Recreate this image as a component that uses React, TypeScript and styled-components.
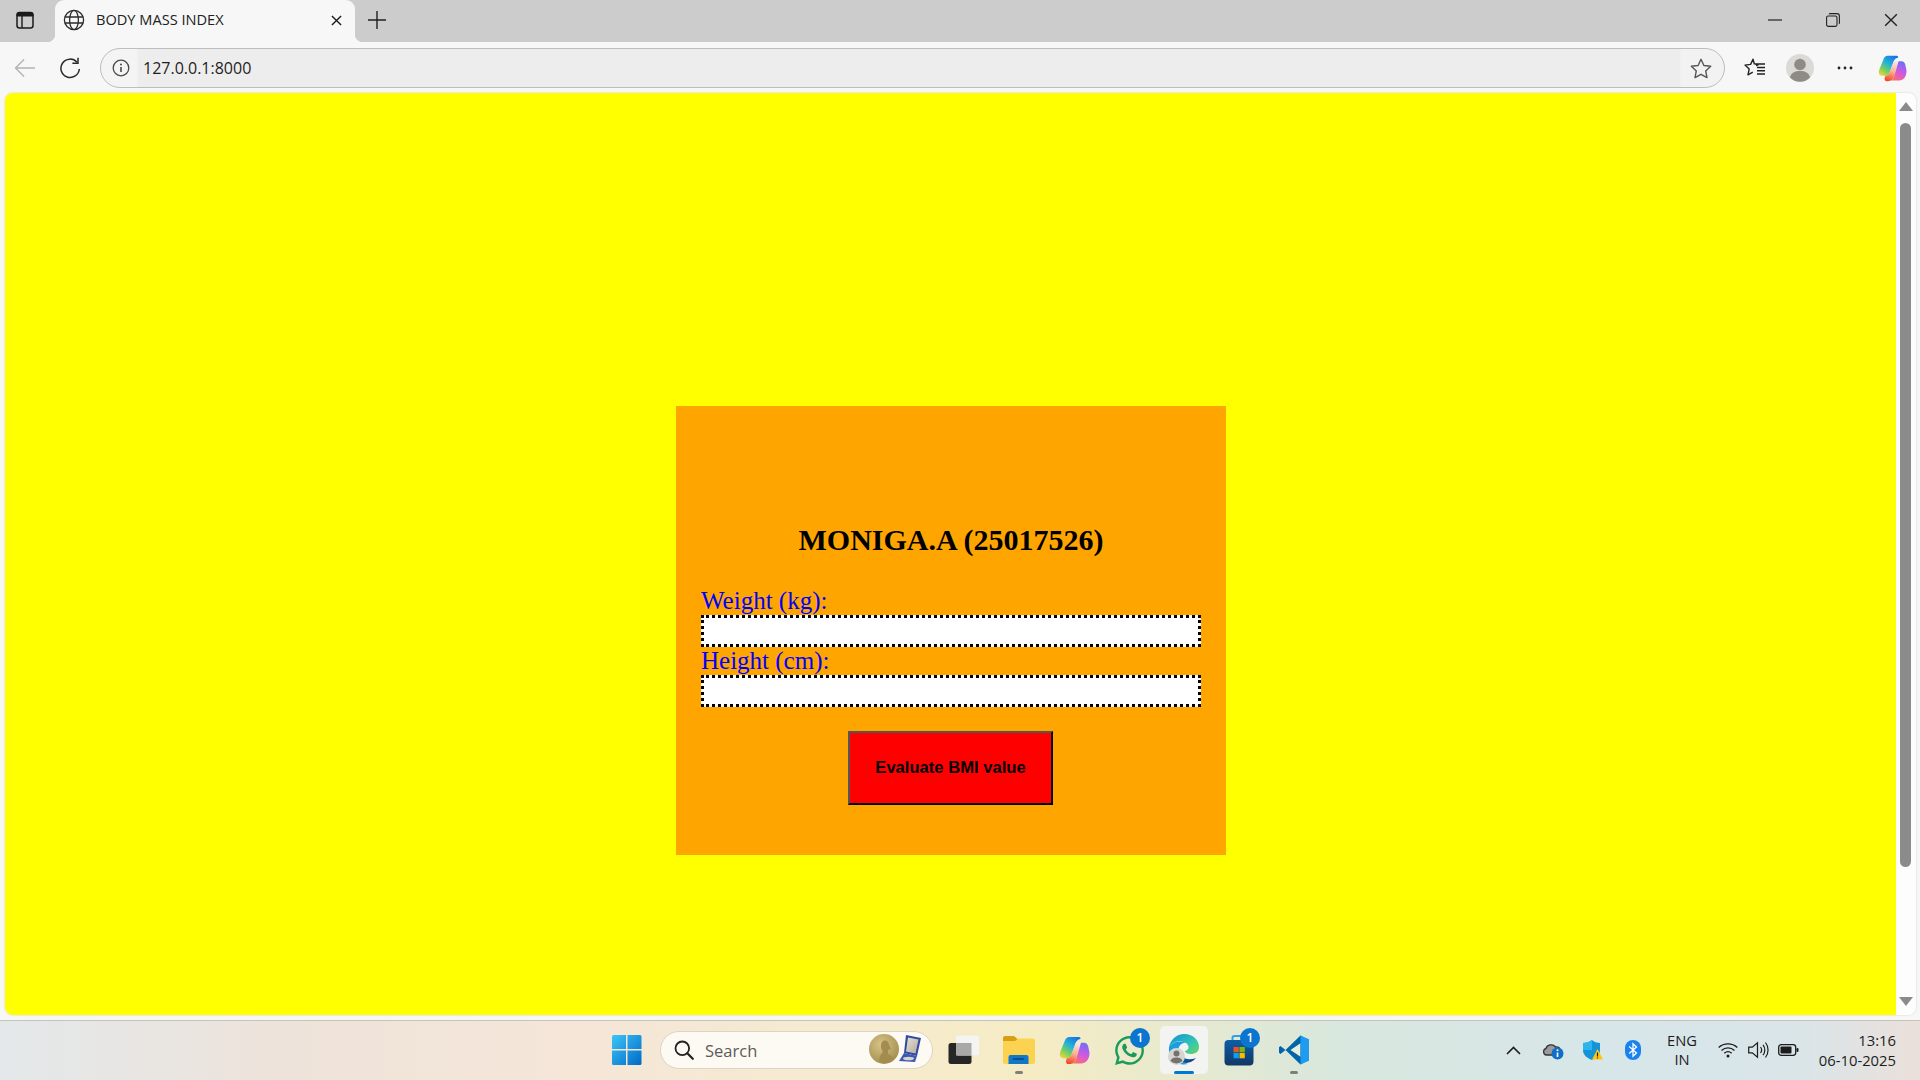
import React from "react";
import styled, { createGlobalStyle } from "styled-components";
import { FaWhatsapp } from "react-icons/fa";

const Global = createGlobalStyle`
  html, body { margin: 0; padding: 0; height: 100%; overflow: hidden; }
  #root { height: 100%; }
`;

const UI = `"Open Sans", "Noto Sans", "Liberation Sans", sans-serif`;

const Desktop = styled.div`
  width: 1920px;
  height: 1080px;
  display: flex;
  flex-direction: column;
  overflow: hidden;
  background: #f7f7f7;
  font-family: ${UI};
`;

const TabStrip = styled.header`
  height: 42px;
  flex: none;
  display: flex;
  align-items: stretch;
  background: #cccccc;
`;

const StripButton = styled.div<{ $w: number }>`
  width: ${(p) => p.$w}px;
  flex: none;
  display: flex;
  align-items: center;
  justify-content: center;
  padding-bottom: 2px;
  color: #1f1f1f;
`;

const Tab = styled.div`
  position: relative;
  width: 300px;
  margin-left: 5px;
  flex: none;
  display: flex;
  align-items: center;
  padding: 0 13px 2px 8px;
  box-sizing: border-box;
  background: #f7f7f7;
  border-radius: 9px 9px 0 0;
  &::before,
  &::after {
    content: "";
    position: absolute;
    bottom: 0;
    width: 8px;
    height: 8px;
  }
  &::before {
    left: -8px;
    background: radial-gradient(circle at 0 0, transparent 8px, #f7f7f7 8.5px);
  }
  &::after {
    right: -8px;
    background: radial-gradient(circle at 100% 0, transparent 8px, #f7f7f7 8.5px);
  }
`;

const TabTitle = styled.span`
  flex: 1;
  margin: 0 0 2px 11px;
  font-size: 14.6px;
  color: #222;
  white-space: nowrap;
`;

const StripSpacer = styled.div`
  flex: 1;
`;

const Toolbar = styled.div`
  height: 51px;
  flex: none;
  display: flex;
  align-items: center;
  padding: 1px 3px 0 2px;
  box-sizing: border-box;
  background: #f7f7f7;
`;

const ToolSlot = styled.div<{ $w: number }>`
  width: ${(p) => p.$w}px;
  height: 40px;
  flex: none;
  display: flex;
  align-items: center;
  justify-content: center;
`;

const AddressBar = styled.div`
  flex: 1;
  height: 40px;
  margin: 0 7px 0 8px;
  box-sizing: border-box;
  display: flex;
  align-items: center;
  border: 1px solid #bdbdbd;
  border-radius: 20px;
  background: linear-gradient(90deg, #f4f4f4 0, #f4f4f4 36px, #ededed 37px, #ededed calc(100% - 44px), #f2f2f2 calc(100% - 43px));
`;

const InfoSlot = styled.div`
  width: 40px;
  flex: none;
  display: flex;
  justify-content: center;
`;

const Url = styled.span`
  flex: 1;
  margin-left: 2px;
  font-size: 16px;
  color: #1e1e1e;
`;

const StarSlot = styled.div`
  width: 46px;
  flex: none;
  display: flex;
  justify-content: center;
`;

const Shell = styled.div`
  flex: 1;
  display: flex;
  min-height: 0;
  padding: 0 4px 5px 5px;
  background: #f7f7f7;
`;

const Viewport = styled.main`
  flex: 1;
  display: flex;
  border-radius: 8px;
  overflow: hidden;
  box-shadow: 0 0 2px rgba(0, 0, 0, 0.18);
`;

const Page = styled.div`
  flex: 1;
  display: flex;
  justify-content: center;
  align-items: flex-start;
  padding: 313px 0 0 1px;
  background: #ffff00;
`;

const Card = styled.form`
  width: 550px;
  height: 449px;
  box-sizing: border-box;
  padding: 116px 25px 0;
  display: flex;
  flex-direction: column;
  background: #ffa500;
  font-family: "Liberation Serif", "Times New Roman", serif;
`;

const Title = styled.h1`
  margin: 0 0 30px;
  text-align: center;
  font-size: 30px;
  line-height: 35px;
  font-weight: 700;
  color: #000;
`;

const FieldLabel = styled.label`
  display: block;
  font-size: 25px;
  line-height: 28px;
  color: #0000ff;
`;

const TextField = styled.input`
  display: block;
  width: 100%;
  height: 32px;
  box-sizing: border-box;
  margin: 0;
  padding: 0;
  border: 3px dotted #000;
  background: #fff;
  outline: none;
`;

const SubmitButton = styled.button`
  align-self: center;
  width: 205px;
  height: 74px;
  margin: 24px 1px 0 0;
  box-sizing: border-box;
  border: 2px outset #000;
  border-color: #555 #000 #000 #555;
  background: #ff0000;
  color: #000;
  font-family: "Liberation Sans", Arial, sans-serif;
  font-size: 16.6px;
  font-weight: 700;
  padding: 0;
`;

const ScrollRail = styled.aside`
  width: 20px;
  flex: none;
  display: flex;
  flex-direction: column;
  align-items: center;
  padding: 9px 1px 9px 0;
  box-sizing: border-box;
  background: #fdfdfd;
`;

const ScrollThumb = styled.div`
  width: 11px;
  height: 744px;
  margin-top: 12px;
  border-radius: 6px;
  background: #8b8b8b;
`;

const ArrowUp = styled.div`
  width: 0;
  height: 0;
  border-left: 7px solid transparent;
  border-right: 7px solid transparent;
  border-bottom: 9px solid #8b8b8b;
`;

const ArrowDown = styled(ArrowUp)`
  margin-top: auto;
  transform: rotate(180deg);
`;

const Taskbar = styled.footer`
  height: 60px;
  flex: none;
  box-sizing: border-box;
  display: flex;
  align-items: center;
  padding: 0 0 1px 601px;
  border-top: 1px solid #c6c4ba;
  background: linear-gradient(
    90deg,
    #e3e8ea 0,
    #eee3da 15%,
    #f5e6d8 30%,
    #f6ebcf 45%,
    #f5ecc4 54%,
    #e6e9cf 62%,
    #d8e7de 70%,
    #d7e6e9 85%,
    #dae5e8 94%,
    #ebe0da 100%
  );
`;

const TaskSlot = styled.div<{ $active?: boolean }>`
  position: relative;
  width: 48px;
  height: 48px;
  margin-right: 7px;
  flex: none;
  display: flex;
  align-items: center;
  justify-content: center;
  border-radius: 5px;
  background: ${(p) => (p.$active ? "#f3f4f1" : "transparent")};
`;

const StartSlot = styled(TaskSlot)`
  width: 52px;
  margin-right: 7px;
`;

const RunDot = styled.span<{ $active?: boolean }>`
  position: absolute;
  left: 50%;
  bottom: 0;
  width: ${(p) => (p.$active ? "20px" : "8px")};
  height: 3px;
  transform: translateX(-50%);
  border-radius: 2px;
  background: ${(p) => (p.$active ? "#0078d4" : "#7f7f7f")};
`;

const Badge = styled.span`
  position: absolute;
  top: 2px;
  right: 3px;
  width: 20px;
  height: 20px;
  border-radius: 50%;
  background: #0b75cf;
  color: #fff;
  font-size: 12px;
  font-weight: 600;
  line-height: 20px;
  text-align: center;
`;

const SearchPill = styled.div`
  width: 273px;
  height: 38px;
  margin-right: 7px;
  flex: none;
  box-sizing: border-box;
  display: flex;
  align-items: center;
  padding: 0 11px 0 13px;
  border: 1px solid #dcd4c5;
  border-radius: 19px;
  background: #fdf9f3;
`;

const SearchText = styled.span`
  flex: 1;
  margin-left: 11px;
  font-size: 16.5px;
  color: #5c5c5c;
`;

const Tray = styled.div`
  margin-left: auto;
  display: flex;
  align-items: center;
  height: 100%;
  padding-right: 24px;
  color: #1c1c1c;
`;

const TrayIcon = styled.div<{ $w: number }>`
  width: ${(p) => p.$w}px;
  flex: none;
  display: flex;
  align-items: center;
  justify-content: center;
`;

const Lang = styled.div`
  width: 58px;
  margin-right: 2px;
  flex: none;
  text-align: center;
  font-size: 14.7px;
  line-height: 19.5px;
`;

const Clock = styled.div`
  width: 93px;
  flex: none;
  text-align: right;
  font-size: 14.8px;
  line-height: 20px;
`;

const SidebarIcon = () => (
  <svg width="20" height="20" viewBox="0 0 20 20" fill="none" stroke="#1a1a1a">
    <rect x="2" y="2.5" width="16" height="15.5" rx="2.5" strokeWidth="1.5" />
    <path d="M2 5 a2.5 2.5 0 0 1 2.5-2.5 h11 a2.5 2.5 0 0 1 2.5 2.5 v1 H2z" fill="#1a1a1a" />
    <path d="M7 6v12" strokeWidth="1.4" />
  </svg>
);

const Globe = () => (
  <svg width="22" height="22" viewBox="0 0 22 22" fill="none" stroke="#2b2b2b" strokeWidth="1.3">
    <circle cx="11" cy="11" r="9.6" />
    <ellipse cx="11" cy="11" rx="4.4" ry="9.6" />
    <path d="M1.8 8h18.4M1.8 14h18.4" />
  </svg>
);

const Close = ({ s = 12, c = "#1a1a1a", w = 1.5 }: { s?: number; c?: string; w?: number }) => (
  <svg width={s} height={s} viewBox="0 0 12 12" fill="none" stroke={c} strokeWidth={w}>
    <path d="M1 1l10 10M11 1L1 11" />
  </svg>
);

const Plus = () => (
  <svg width="18" height="18" viewBox="0 0 18 18" stroke="#1f1f1f" strokeWidth="1.4">
    <path d="M9 0v18M0 9h18" />
  </svg>
);

const Minimize = () => (
  <svg width="14" height="2" viewBox="0 0 14 2" stroke="#222" strokeWidth="1.2">
    <path d="M0 1h14" />
  </svg>
);

const Restore = () => (
  <svg width="14" height="14" viewBox="0 0 14 14" fill="none" stroke="#222" strokeWidth="1.1">
    <rect x="0.6" y="3" width="10.4" height="10.4" rx="1.6" />
    <path d="M3.2 1.2 a1 1 0 0 1 .8-.6 h7 a2.4 2.4 0 0 1 2.4 2.4 v7 a1 1 0 0 1-.6.8" />
  </svg>
);

const Back = () => (
  <svg width="22" height="20" viewBox="0 0 22 20" fill="none" stroke="#b4b4b4" strokeWidth="1.4">
    <path d="M21 10H1.5M10 1.5L1.5 10l8.5 8.5" />
  </svg>
);

const Refresh = () => (
  <svg width="22" height="22" viewBox="0 0 22 22" fill="none" stroke="#2a2a2a" strokeWidth="1.5">
    <path d="M18 5.2 A9.2 9.2 0 1 0 20.3 12" />
    <path d="M19 .8v5.4h-5.6" />
  </svg>
);

const Info = () => (
  <svg width="18" height="18" viewBox="0 0 18 18" fill="none" stroke="#4a4a4a" strokeWidth="1.3">
    <circle cx="9" cy="9" r="7.8" />
    <path d="M9 8v5" strokeWidth="1.6" />
    <circle cx="9" cy="5.4" r="1" fill="#4a4a4a" stroke="none" />
  </svg>
);

const Star = () => (
  <svg width="22" height="21" viewBox="0 0 22 21" fill="none" stroke="#555" strokeWidth="1.4" strokeLinejoin="round">
    <path d="M11 1.3l2.9 6.2 6.8.8-5 4.6 1.3 6.7L11 16.3l-6 3.3 1.3-6.7-5-4.6 6.8-.8z" />
  </svg>
);

const Favorites = () => (
  <svg width="22" height="20" viewBox="0 0 22 20" fill="none" stroke="#222" strokeWidth="1.4" strokeLinejoin="round">
    <path d="M10.5 6.5 L9 1.2 6.6 6.4 1 7.1l4.2 3.8L4 16.8l4.8-2.6" />
    <path d="M12 7.5l2.5-.6M13 9.5h8M13 12.8h8M13 16h8M11 6h10" />
  </svg>
);

const Profile = () => (
  <svg width="28" height="28" viewBox="0 0 28 28">
    <circle cx="14" cy="14" r="14" fill="#dcdad6" />
    <circle cx="14" cy="10.5" r="5.8" fill="#8f8a85" />
    <path d="M4 23.5 C5 18.5 9 17 14 17 s9 1.5 10 6.5 A14 14 0 0 1 4 23.5z" fill="#8f8a85" />
  </svg>
);

const Dots = () => (
  <svg width="16" height="4" viewBox="0 0 16 4" fill="#222">
    <circle cx="2" cy="2" r="1.4" />
    <circle cx="8" cy="2" r="1.4" />
    <circle cx="14" cy="2" r="1.4" />
  </svg>
);

const Copilot = ({ id, s }: { id: string; s: number }) => (
  <svg width={s} height={s} viewBox="0 0 48 48">
    <defs>
      <linearGradient id={`${id}a`} x1="0.75" y1="0" x2="0.1" y2="1">
        <stop offset="0" stopColor="#1a74e6" />
        <stop offset="0.4" stopColor="#22b4d6" />
        <stop offset="0.72" stopColor="#7fd05a" />
        <stop offset="1" stopColor="#f2d83a" />
      </linearGradient>
      <linearGradient id={`${id}b`} x1="0.7" y1="0" x2="0.3" y2="1">
        <stop offset="0" stopColor="#6a74ee" />
        <stop offset="0.35" stopColor="#b45cf0" />
        <stop offset="0.75" stopColor="#ec5eb6" />
        <stop offset="1" stopColor="#f7735a" />
      </linearGradient>
      <linearGradient id={`${id}c`} x1="0.6" y1="0" x2="0.4" y2="1">
        <stop offset="0" stopColor="#f7e6ea" />
        <stop offset="0.5" stopColor="#fbb28e" />
        <stop offset="1" stopColor="#f04a2a" />
      </linearGradient>
    </defs>
    <path d="M16 3 H31 C33 3 34 5 33 6 C29 7 27 9 26 12 L19 31 C18 34 15 36 12 36 H7 C2 36 0 31 2 26 L9 9 C10 5 13 3 16 3z" fill={`url(#${id}a)`} />
    <path d="M26 12 H34 L27 36 C26 41 22 45 16 45 H14 C11 45 10 41 12 36 C15 36 18 34 19 31z" fill={`url(#${id}c)`} />
    <path d="M34 12 H39 C42 12 44 14 45 17 L47 26 C48 34 44 44 35 44 H18 C24 44 26 40 27 36z" fill={`url(#${id}b)`} />
  </svg>
);

const WinLogo = () => (
  <svg width="30" height="30" viewBox="0 0 30 30">
    <defs>
      <linearGradient id="win" x1="0" y1="0" x2="1" y2="1">
        <stop offset="0" stopColor="#3bc6f7" />
        <stop offset="1" stopColor="#0069c8" />
      </linearGradient>
    </defs>
    <path d="M0 1.500a1.500 1.500 0 0 1 1.500-1.500H14v14H0zM15.500 0H28a1.500 1.500 0 0 1 1.500 1.500V14h-14zM0 15.500h14V30H1.500A1.500 1.500 0 0 1 0 28.500zM15.500 15.500h14V28.500A1.500 1.500 0 0 1 28 30H15.500z" fill="url(#win)" />
  </svg>
);

const SearchGlass = () => (
  <svg width="20" height="20" viewBox="0 0 20 20" fill="none" stroke="#222" strokeWidth="1.8">
    <circle cx="8.300" cy="8.300" r="6.800" />
    <path d="M13.300 13.300L18.800 18.800" strokeWidth="2.200" strokeLinecap="round" />
  </svg>
);

const Medal = () => (
  <svg width="52" height="32" viewBox="0 0 52 32">
    <defs>
      <radialGradient id="gold" cx="0.4" cy="0.35" r="0.8">
        <stop offset="0" stopColor="#d8c488" />
        <stop offset="1" stopColor="#9c8648" />
      </radialGradient>
      <linearGradient id="plate" x1="0" y1="0" x2="1" y2="1">
        <stop offset="0" stopColor="#e6ded4" />
        <stop offset="1" stopColor="#b5aaa0" />
      </linearGradient>
    </defs>
    <circle cx="15" cy="15" r="15" fill="url(#gold)" />
    <path d="M10 27 C11 21 12 20 14 18 C12 15 11 11 13 8 C16 5 20 7 20 11 L22 15 L19 16 L19 20 C22 21 24 23 25 25 C21 30 14 30 10 27z" fill="#a38c4e" />
    <path d="M37 1 L52 4 L48 22 L35 19z" fill="#2d4ba0" />
    <path d="M39 3.500 L49.500 5.500 L46.500 19.500 L37 17.500z" fill="url(#plate)" />
    <path d="M35 19 L48 22 L46 28 L30 27z" fill="#3a59b5" />
    <ellipse cx="39.500" cy="24.500" rx="5.500" ry="1.800" fill="#d9d3cb" />
  </svg>
);

const TaskView = () => (
  <svg width="32" height="30" viewBox="0 0 32 30">
    <rect x="0.500" y="8" width="23" height="21" rx="2.500" fill="#262626" />
    <rect x="8" y="0.500" width="23" height="20" rx="2" fill="#f4f4f3" />
    <rect x="8" y="8" width="15.500" height="12.500" fill="#a9a9a7" />
  </svg>
);

const Explorer = () => (
  <svg width="32" height="30" viewBox="0 0 32 30">
    <path d="M0 3a2 2 0 0 1 2-2h9l3.500 3H30v6H0z" fill="#d99f12" />
    <path d="M0 6h12l3-2.500h14.500A2.500 2.500 0 0 1 32 6v21a2 2 0 0 1-2 2H2a2 2 0 0 1-2-2z" fill="#fbd351" />
    <path d="M5.500 29v-7a2 2 0 0 1 2-2h16a2 2 0 0 1 2 2v7z" fill="#1177c9" />
    <path d="M10 24h11" stroke="#07396a" strokeWidth="1.300" />
  </svg>
);

const Edge = () => (
  <svg width="32" height="32" viewBox="0 0 32 32">
    <defs>
      <linearGradient id="edgeA" x1="0" y1="0" x2="1" y2="1">
        <stop offset="0" stopColor="#0f8fd8" />
        <stop offset="0.6" stopColor="#34c6b5" />
        <stop offset="1" stopColor="#6bd35a" />
      </linearGradient>
      <linearGradient id="edgeB" x1="0" y1="0" x2="1" y2="1">
        <stop offset="0" stopColor="#0b6ab8" />
        <stop offset="1" stopColor="#0a3d7a" />
      </linearGradient>
    </defs>
    <path d="M1 13 C3 4 10 0 16 0 C26 0 31 7 31 13 C31 18 27 20 23 20 C20 20 17 19 17 17 C21 16 22 12 18 9 C12 5 4 8 1 13z" fill="url(#edgeA)" />
    <path d="M1 13 C4 8 13 6 18 9 C14 8 10 12 10 18 C10 24 14 28 20 30 C12 32 0 28 1 13z" fill="#1b9de2" />
    <path d="M10 24 C13 30 22 31 28 24 C23 26 17 26 14 22z" fill="url(#edgeB)" />
    <circle cx="8.500" cy="22.500" r="8.500" fill="#d7d5d1" />
    <circle cx="8.500" cy="19.500" r="3" fill="#75716d" />
    <path d="M2.500 27 C3.500 24 6 23.500 8.500 23.500 S13.500 24 14.500 27 A8.500 8.500 0 0 1 2.500 27z" fill="#75716d" />
  </svg>
);

const Store = () => (
  <svg width="30" height="32" viewBox="0 0 30 32">
    <defs>
      <linearGradient id="storeBag" x1="0" y1="0" x2="0" y2="1">
        <stop offset="0" stopColor="#0d5ea8" />
        <stop offset="1" stopColor="#123766" />
      </linearGradient>
    </defs>
    <path d="M8.500 8 V4 a2 2 0 0 1 2-2h9a2 2 0 0 1 2 2v4" fill="none" stroke="#2aa2e8" strokeWidth="2" />
    <rect x="0.500" y="6" width="29" height="25.500" rx="4" fill="url(#storeBag)" />
    <rect x="9.500" y="13" width="5.300" height="5.300" fill="#f25022" />
    <rect x="15.500" y="13" width="5.300" height="5.300" fill="#7fba00" />
    <rect x="9.500" y="19" width="5.300" height="5.300" fill="#00a4ef" />
    <rect x="15.500" y="19" width="5.300" height="5.300" fill="#ffb900" />
  </svg>
);

const VSCode = () => (
  <svg width="30" height="30" viewBox="0 0 30 30">
    <path d="M21.500 0.500 L6.500 15 L1.500 11 L0 12.300 V17.700 L1.500 19 L6.500 15 L21.500 29.500 L24 28 V2z" fill="#0065a9" />
    <path d="M21.500 8.200 L11.500 15 L21.500 21.800z" fill="#e9eed9" />
    <path d="M21.500 0.500 L30 4.300 V25.700 L21.500 29.500z" fill="#1f9cf0" />
  </svg>
);

const Chevron = () => (
  <svg width="15" height="9" viewBox="0 0 15 9" fill="none" stroke="#1c1c1c" strokeWidth="1.600">
    <path d="M1 8l6.500-6.500L14 8" />
  </svg>
);

const OneDrive = () => (
  <svg width="21" height="20" viewBox="0 0 21 20">
    <path d="M3.500 15 C0 15 -0.500 9 3 8.500 C4 4.500 10 3.500 12.500 7 C15.500 6.500 17 8 17 10 L10 15z" fill="#9b9b9b" stroke="#333" strokeWidth="1.300" />
    <circle cx="14.500" cy="13.500" r="6" fill="#0f6fc6" />
    <path d="M14.500 12.500v4.500" stroke="#fff" strokeWidth="1.600" />
    <circle cx="14.500" cy="10.300" r="1" fill="#fff" />
  </svg>
);

const Shield = () => (
  <svg width="20" height="20" viewBox="0 0 20 20">
    <path d="M9 0 C11 2 14 3 17 3 V10 C17 15 13 18 9 20 C4 18 0 15 0 10 V3 C3 3 6.500 2 9 0z" fill="#1593d9" />
    <path d="M9 0 C6.500 2 3 3 0 3 V10 H9z" fill="#2bb6ee" />
    <path d="M14.500 9 L20 19.500 H9z" fill="#ffc60b" />
    <path d="M14.500 12.500v4M14.500 17.500v1" stroke="#222" strokeWidth="1.200" />
  </svg>
);

const Bluetooth = () => (
  <svg width="16" height="20" viewBox="0 0 16 20">
    <rect width="16" height="20" rx="8" fill="#1a82ee" />
    <path d="M4.200 6.500L11.500 13L8 16.200V3.800L11.500 7L4.200 13.500" fill="none" stroke="#fff" strokeWidth="1.300" />
  </svg>
);

const Wifi = () => (
  <svg width="20" height="16" viewBox="0 0 20 16" fill="none" stroke="#1c1c1c" strokeWidth="1.300">
    <path d="M.7 5.500C6 .7 14 .7 19.300 5.500M3.500 8.500C7.300 5 12.700 5 16.500 8.500M6.300 11.300C8.500 9.300 11.500 9.300 13.700 11.300" />
    <circle cx="10" cy="14" r="1.500" fill="#1c1c1c" stroke="none" />
  </svg>
);

const Volume = () => (
  <svg width="21" height="18" viewBox="0 0 21 18" fill="none" stroke="#1c1c1c" strokeWidth="1.200">
    <path d="M.7 6.200h3.600L9.500 1.700v14.600L4.300 11.800H.7z" />
    <path d="M12.500 6c1.400 1.800 1.400 4.200 0 6M15 3.800c2.400 3 2.400 7.400 0 10.400M17.500 1.500c3.400 4.400 3.400 10.600 0 15" />
  </svg>
);

const Battery = () => (
  <svg width="21" height="12" viewBox="0 0 21 12">
    <rect x="0.700" y="0.700" width="17" height="10.600" rx="2.500" fill="none" stroke="#1c1c1c" strokeWidth="1.300" />
    <rect x="2.500" y="2.500" width="11" height="7" rx="1" fill="#1c1c1c" />
    <rect x="18.500" y="4" width="2" height="4" rx="1" fill="#1c1c1c" />
  </svg>
);

export default function App() {
  return (
    <Desktop>
      <Global />
      <TabStrip>
        <StripButton $w={50}>
          <SidebarIcon />
        </StripButton>
        <Tab>
          <Globe />
          <TabTitle>BODY MASS INDEX</TabTitle>
          <Close s={11} />
        </Tab>
        <StripButton $w={44}>
          <Plus />
        </StripButton>
        <StripSpacer />
        <StripButton $w={58}>
          <Minimize />
        </StripButton>
        <StripButton $w={58}>
          <Restore />
        </StripButton>
        <StripButton $w={58}>
          <Close s={14} c="#222" w={1.2} />
        </StripButton>
      </TabStrip>

      <Toolbar>
        <ToolSlot $w={45}>
          <Back />
        </ToolSlot>
        <ToolSlot $w={45}>
          <Refresh />
        </ToolSlot>
        <AddressBar>
          <InfoSlot>
            <Info />
          </InfoSlot>
          <Url>127.0.0.1:8000</Url>
          <StarSlot>
            <Star />
          </StarSlot>
        </AddressBar>
        <ToolSlot $w={45}>
          <Favorites />
        </ToolSlot>
        <ToolSlot $w={45}>
          <Profile />
        </ToolSlot>
        <ToolSlot $w={45}>
          <Dots />
        </ToolSlot>
        <ToolSlot $w={50}>
          <Copilot id="cpA" s={29} />
        </ToolSlot>
      </Toolbar>

      <Shell>
        <Viewport>
          <Page>
            <Card onSubmit={(e) => e.preventDefault()}>
              <Title>MONIGA.A (25017526)</Title>
              <FieldLabel htmlFor="weight">Weight (kg):</FieldLabel>
              <TextField id="weight" type="text" />
              <FieldLabel htmlFor="height">Height (cm):</FieldLabel>
              <TextField id="height" type="text" />
              <SubmitButton type="submit">Evaluate BMI value</SubmitButton>
            </Card>
          </Page>
          <ScrollRail>
            <ArrowUp />
            <ScrollThumb />
            <ArrowDown />
          </ScrollRail>
        </Viewport>
      </Shell>

      <Taskbar>
        <StartSlot>
          <WinLogo />
        </StartSlot>
        <SearchPill>
          <SearchGlass />
          <SearchText>Search</SearchText>
          <Medal />
        </SearchPill>
        <TaskSlot>
          <TaskView />
        </TaskSlot>
        <TaskSlot>
          <Explorer />
          <RunDot />
        </TaskSlot>
        <TaskSlot>
          <Copilot id="cpB" s={31} />
        </TaskSlot>
        <TaskSlot>
          <FaWhatsapp size={33} color="#1c9a5a" />
          <Badge>1</Badge>
        </TaskSlot>
        <TaskSlot $active>
          <Edge />
          <RunDot $active />
        </TaskSlot>
        <TaskSlot>
          <Store />
          <Badge>1</Badge>
        </TaskSlot>
        <TaskSlot>
          <VSCode />
          <RunDot />
        </TaskSlot>
        <Tray>
          <TrayIcon $w={40}>
            <Chevron />
          </TrayIcon>
          <TrayIcon $w={40}>
            <OneDrive />
          </TrayIcon>
          <TrayIcon $w={40}>
            <Shield />
          </TrayIcon>
          <TrayIcon $w={40}>
            <Bluetooth />
          </TrayIcon>
          <Lang>
            ENG
            <br />
            IN
          </Lang>
          <TrayIcon $w={30}>
            <Wifi />
          </TrayIcon>
          <TrayIcon $w={30}>
            <Volume />
          </TrayIcon>
          <TrayIcon $w={30}>
            <Battery />
          </TrayIcon>
          <Clock>
            13:16
            <br />
            06-10-2025
          </Clock>
        </Tray>
      </Taskbar>
    </Desktop>
  );
}
